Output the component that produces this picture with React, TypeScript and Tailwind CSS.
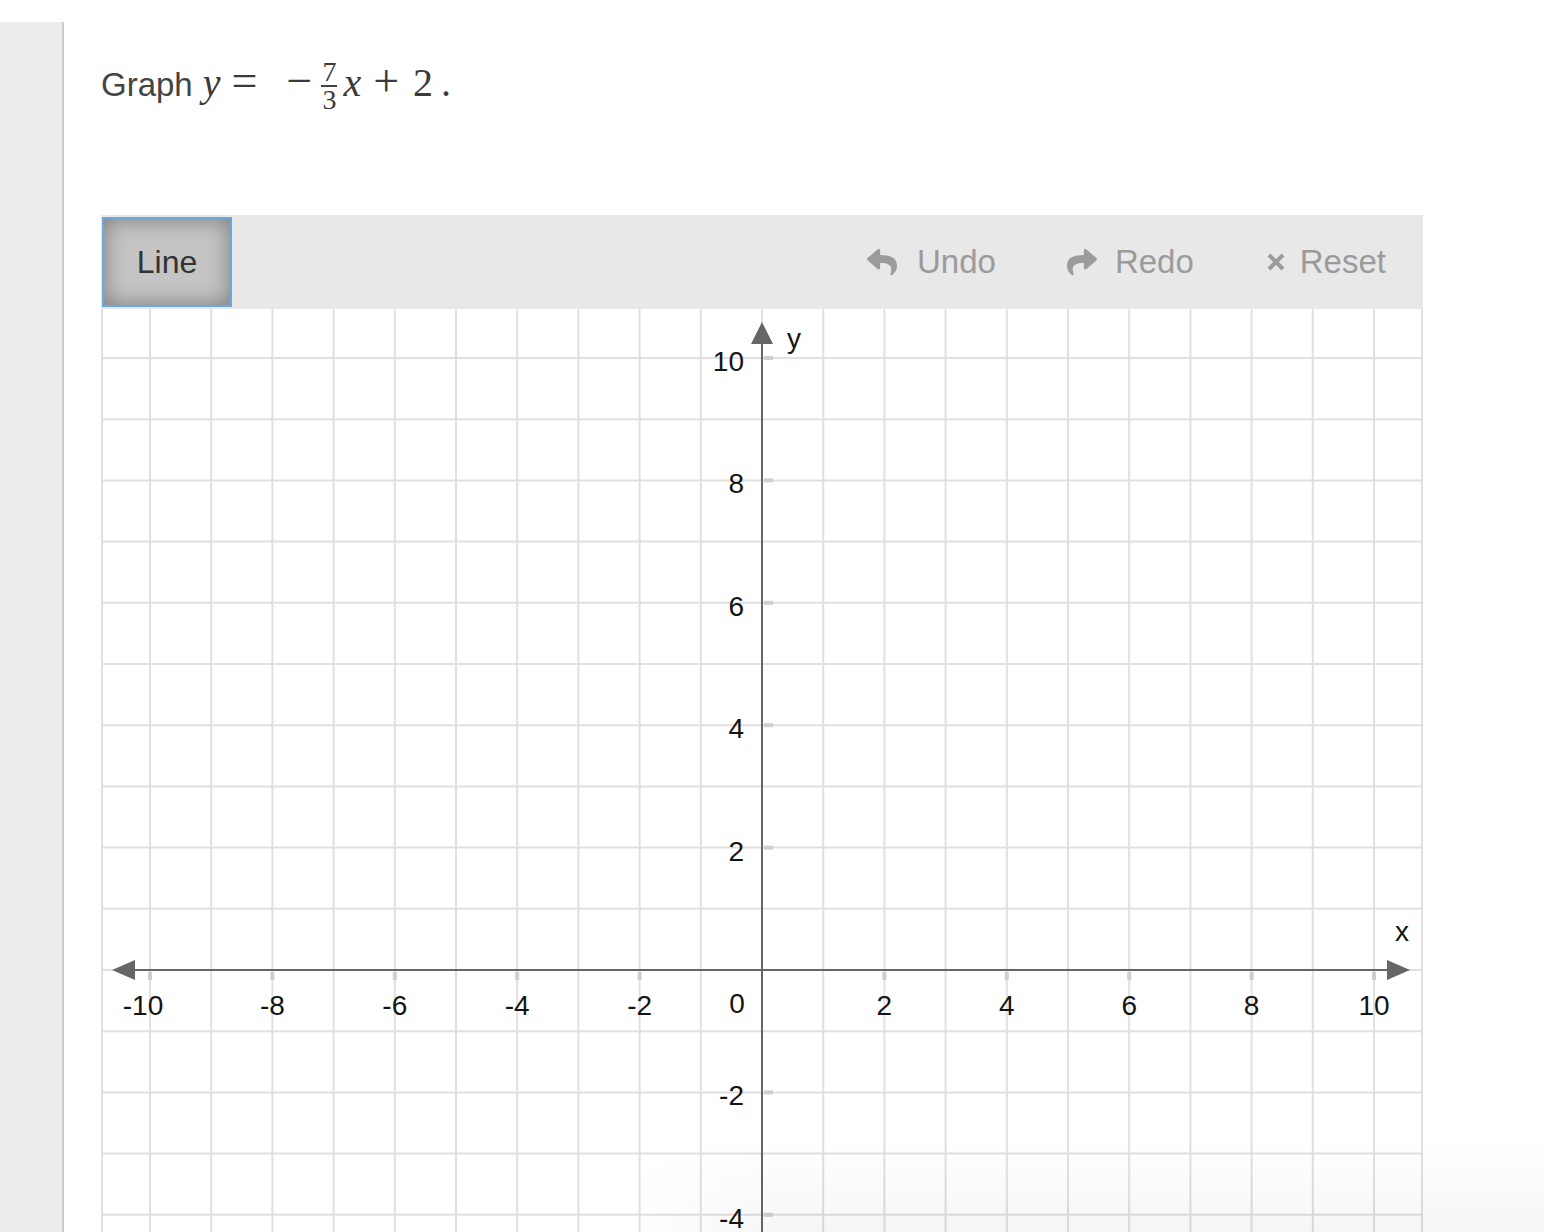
import React from 'react'
import { FaReply, FaShare } from 'react-icons/fa'

const U = 61.2
const O = 661
const SIZE = 1322
const px = (k: number) => O + k * U
const py = (k: number) => O - k * U
const range = Array.from({ length: 21 }, (_, i) => i - 10)
const evens = range.filter((k) => k % 2 === 0 && k !== 0)

const Grid = () => {
  return (
    <svg width={SIZE} height={SIZE} viewBox={`0 0 ${SIZE} ${SIZE}`} className="block shrink-0" style={{ fontFamily: '"Liberation Sans", Arial, sans-serif' }}>
      <rect x={0} y={0} width={SIZE} height={SIZE} fill="#ffffff" />
      {range.map((k) => (
        <line key={'v' + k} x1={px(k)} y1={0} x2={px(k)} y2={SIZE} stroke="#e0e0e0" strokeWidth={2} />
      ))}
      {range.map((k) => (
        <line key={'h' + k} x1={0} y1={py(k)} x2={SIZE} y2={py(k)} stroke="#e0e0e0" strokeWidth={2} />
      ))}
      <line x1={1} y1={0} x2={1} y2={SIZE} stroke="#e0e0e0" strokeWidth={2} />
      <line x1={SIZE - 1} y1={0} x2={SIZE - 1} y2={SIZE} stroke="#e0e0e0" strokeWidth={2} />

      {/* ticks */}
      {evens.map((k) => (
        <rect key={'tx' + k} x={px(k) - 2} y={O + 2} width={4} height={8} fill="#cfcfcf" />
      ))}
      {evens.map((k) => (
        <rect key={'ty' + k} x={O + 2} y={py(k) - 2} width={9} height={4} fill="#cfcfcf" />
      ))}

      {/* axes */}
      <line x1={30} y1={O} x2={SIZE - 32} y2={O} stroke="#666666" strokeWidth={2} />
      <line x1={O} y1={30} x2={O} y2={SIZE} stroke="#666666" strokeWidth={2} />
      <polygon points={`11,${O} 34,${O - 10} 34,${O + 10}`} fill="#666666" />
      <polygon points={`${SIZE - 13},${O} ${SIZE - 36},${O - 10} ${SIZE - 36},${O + 10}`} fill="#666666" />
      <polygon points={`${O},13 ${O - 11},35 ${O + 11},35`} fill="#666666" />

      {/* labels */}
      {evens.map((k) => (
        <text key={'lx' + k} x={k === -10 ? px(k) - 7 : px(k)} y={O + 45} textAnchor="middle" fontSize={28} fill="#141414">
          {k}
        </text>
      ))}
      {evens.map((k) => (
        <text key={'ly' + k} x={O - 18} y={py(k) + 13} textAnchor="end" fontSize={28} fill="#141414">
          {k}
        </text>
      ))}
      <text x={O - 25} y={O + 43} textAnchor="middle" fontSize={28} fill="#141414">0</text>
      <text x={O + 25} y={39} fontSize={28} fill="#141414">y</text>
      <text x={SIZE - 28} y={O - 29} fontSize={28} fill="#141414">x</text>
    </svg>
  )
}

const serif = { fontFamily: '"Liberation Serif", "Times New Roman", serif' }

const Equation = () => {
  return (
    <div className="shrink-0 pt-[61px] h-[215px] text-[#444] text-[33px] leading-[40px] whitespace-nowrap" style={{ fontFamily: '"Liberation Sans", Arial, sans-serif' }}>
      <span>Graph</span>
      <span className="text-[40px] text-[#3a3a3a]" style={serif}>
        <span className="italic ml-[10px]">y</span>
        <span className="ml-[11px] text-[46px]">=</span>
        <span className="ml-[29px] text-[46px]">−</span>
        <span className="inline-flex flex-col items-center align-middle ml-[9px] mr-[6px] text-[28px] leading-[24px] -translate-y-[1px]">
          <span>7</span>
          <span className="block w-[16px] h-[2px] bg-[#444] my-[1px]"></span>
          <span>3</span>
        </span>
        <span className="italic">x</span>
        <span className="ml-[12px] text-[46px]">+</span>
        <span className="ml-[14px]">2</span>
        <span className="ml-[8px]">.</span>
      </span>
    </div>
  )
}

const Toolbar = () => {
  return (
    <div className="h-[94px] shrink-0 bg-[#e8e8e8] flex items-center" style={{ fontFamily: '"Liberation Sans", Arial, sans-serif' }}>
      <button className="ml-[1px] w-[130px] h-[90px] border-2 border-[#6aa8df] bg-[#c4c4c4] shadow-[inset_0_0_22px_rgba(0,0,0,0.38)] text-[32px] text-[#333] flex items-center justify-center">
        Line
      </button>
      <div className="ml-auto mr-[37px] flex items-center text-[33px] text-[#9b9b9b]">
        <span className="flex items-center">
          <FaReply size={30} className="text-[#9b9b9b]" />
          <span className="ml-[20px]">Undo</span>
        </span>
        <span className="flex items-center ml-[71px]">
          <FaShare size={30} className="text-[#9b9b9b]" />
          <span className="ml-[18px]">Redo</span>
        </span>
        <span className="flex items-center ml-[72px]">
          <svg width="20" height="20" viewBox="0 0 20 20">
            <path d="M3 3 L17 17 M17 3 L3 17" stroke="#9b9b9b" strokeWidth="4" strokeLinecap="butt" />
          </svg>
          <span className="ml-[14px]">Reset</span>
        </span>
      </div>
    </div>
  )
}

export default function App() {
  return (
    <div className="relative h-[1232px] w-full overflow-hidden bg-white flex">
      <div className="w-[64px] shrink-0 pt-[22px]">
        <div className="h-full bg-[#ececec] border-r-2 border-[#cacaca]"></div>
      </div>
      <div className="pl-[37px] flex flex-col shrink-0">
        <Equation />
        <div className="w-[1322px] shrink-0 flex flex-col">
          <Toolbar />
          <Grid />
        </div>
      </div>
      <div className="pointer-events-none absolute bottom-0 left-[620px] right-0 h-[90px] bg-[linear-gradient(to_bottom,rgba(0,0,0,0),rgba(0,0,0,0.035))] [mask-image:linear-gradient(to_right,transparent,black_160px)]"></div>
    </div>
  )
}
